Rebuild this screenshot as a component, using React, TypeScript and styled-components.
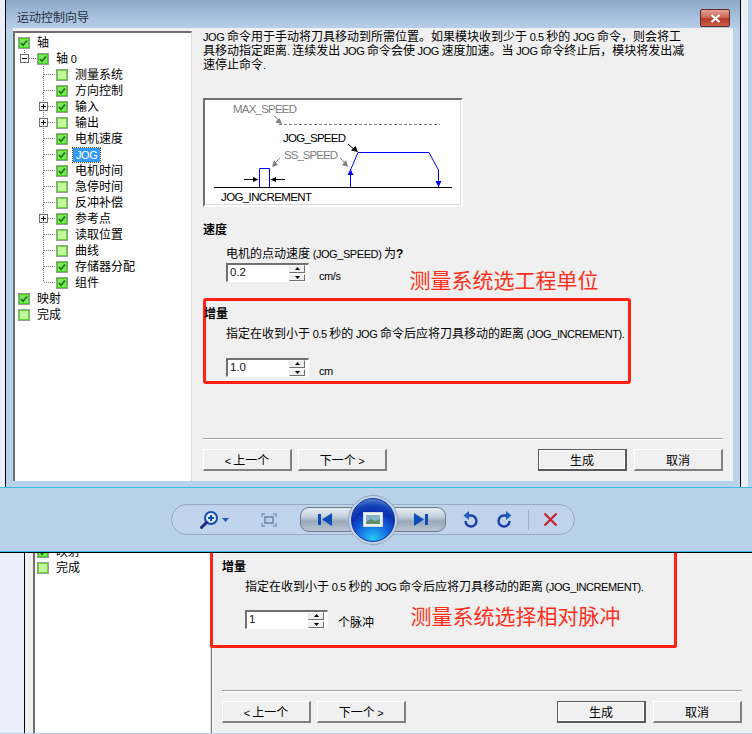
import React from "react";
import styled, { createGlobalStyle } from "styled-components";

const Global = createGlobalStyle`
  html, body { margin: 0; padding: 0; background: #b9d1ea; }
  body { width: 752px; height: 734px; overflow: hidden; font-family: "Liberation Sans", "Noto Sans CJK SC", sans-serif; font-size: 12px; color: #000; }
  * { box-sizing: border-box; }
`;

const Screen = styled.div`
  width: 752px; height: 734px; display: flex; flex-direction: column; overflow: hidden;
`;

const LatinRun = styled.span`
  font-size: 11px; letter-spacing: -0.42px;
`;
const Strong = styled.b`
  font-weight: 700;
`;

/* Latin runs are set narrower than the CJK runs, as the bitmap font of the dialog does. */
const T = ({ s }: { s: string }) => (
  <>
    {s.split(/([\x00-\x7f]+)/).map((part, i) =>
      /[\x00-\x7f]/.test(part) ? <LatinRun key={i}>{part}</LatinRun> : part
    )}
  </>
);

/* ---------- window frame ---------- */
const TopWindow = styled.div`
  height: 487px; flex: none; display: flex; background: #b9d1ea;
`;
const LightEdge = styled.div<{ $w: number }>`
  width: ${(p) => p.$w}px; flex: none; background: #e9f0f9;
`;
const FrameBody = styled.div`
  width: 736px; flex: none; border-left: 1px solid #000; border-right: 1px solid #000; display: flex; flex-direction: column; padding: 0 7px 6px 7px;
  background: linear-gradient(#8da8c8 0, #bad1ea 30px, #b9d1ea 100%);
`;
const TitleBar = styled.div`
  height: 28px; flex: none; display: flex; align-items: flex-start; justify-content: space-between; padding: 11px 3px 0 4px;
`;
const TitleText = styled.span`
  font-size: 12px; line-height: 14px; color: #1f2f42;
`;
const CloseBtn = styled.div`
  width: 30px; height: 18px; margin-top: -2px; border: 1px solid #5f2a24; border-radius: 2px; display: flex; align-items: center; justify-content: center;
  background: linear-gradient(#e3a295 0, #cf6a58 45%, #b53a28 55%, #c8604c 100%);
`;
const Client = styled.div`
  flex: 1; min-height: 0; display: flex; background: #f0f0f0;
`;

/* ---------- tree ---------- */
const TreePane = styled.div<{ $w: number; $bare?: boolean }>`
  width: ${(p) => p.$w}px; flex: none; position: relative; overflow: hidden; background: #fff;
  margin-top: ${(p) => (p.$bare ? 0 : 3)}px;
  border-left: 2px solid #6f6f6f;
  border-top: ${(p) => (p.$bare ? "none" : "2px solid #6f6f6f")};
  border-right: 1px solid #dcdcdc;
  padding-top: ${(p) => (p.$bare ? 0 : 1)}px;
`;
const TreeLines = styled.svg`
  position: absolute; left: 0; top: 0;
`;
const Row = styled.div<{ $indent: number; $first?: boolean }>`
  position: relative; height: 16px; display: flex; align-items: center; gap: 7px; padding-left: ${(p) => p.$indent}px;
  margin-top: ${(p) => (p.$first ? -9 : 0)}px; white-space: nowrap;
`;
const CheckBox = styled.span<{ $on: boolean }>`
  width: 12px; height: 12px; flex: none; border: 1px solid #9c9c9c; position: relative; display: block; top: 1px;
  background: ${(p) => (p.$on ? "#7fe85a" : "#c2f79b")};
  box-shadow: inset 0 0 0 1px ${(p) => (p.$on ? "#3ed015" : "#58dd2c")};
`;
const CheckMark = styled.svg`
  position: absolute; left: 1px; top: 1px;
`;
const Expander = styled.span<{ $left: number }>`
  position: absolute; left: ${(p) => p.$left}px; top: 4px; width: 9px; height: 9px; background: #fff; border: 1px solid #6c6c6c;
  display: flex; align-items: center; justify-content: center;
`;
const Label = styled.span<{ $selected?: boolean }>`
  line-height: 14px; position: relative; top: 1px;
  ${(p) => p.$selected ? "background:#3399ff;color:#fff;outline:1px dotted #7a4a00;padding:0 3px;margin-left:-2px;" : ""}
`;

/* ---------- right panel ---------- */
const Panel = styled.div<{ $left: number; $divider?: boolean }>`
  flex: 1; min-width: 0; position: relative; display: flex; flex-direction: column;
  padding: 0 10px 0 ${(p) => p.$left}px;
  border-left: ${(p) => (p.$divider ? "1px solid #808080" : "none")};
`;
const Intro = styled.p`
  margin: 2px 0 0; line-height: 14px; white-space: nowrap;
`;
const Frame = styled.div`
  margin-top: 26px; width: 260px; height: 109px; flex: none; border-top: 2px solid #6f6f6f; border-left: 2px solid #6f6f6f; border-right: 2px solid #fff; border-bottom: 2px solid #fff; background: #fff; box-shadow: inset -1px -1px 0 #dcdcdc;
`;
const Heading = styled.div<{ $mt: number; $ml: number }>`
  margin: ${(p) => p.$mt}px 0 0 ${(p) => p.$ml}px; line-height: 14px; font-weight: 700; white-space: nowrap;
`;
const Line = styled.div<{ $mt: number; $ml: number }>`
  margin: ${(p) => p.$mt}px 0 0 ${(p) => p.$ml}px; line-height: 14px; white-space: nowrap;
`;
const SpinRow = styled.div<{ $mt: number; $ml: number }>`
  margin: ${(p) => p.$mt}px 0 0 ${(p) => p.$ml}px; display: flex; align-items: flex-start; gap: 10px; height: 19px;
`;
const Spinner = styled.div`
  width: 83px; height: 19px; flex: none; display: flex; border-top: 2px solid #707070; border-left: 2px solid #707070; border-right: 1px solid #fff; border-bottom: 1px solid #fff; background: #fff; padding-right: 3px;
`;
const SpinValue = styled.span`
  flex: 1; padding-left: 2px; font-size: 11.5px; line-height: 15px; color: #111;
`;
const SpinBtns = styled.div`
  width: 16px; flex: none; display: flex; flex-direction: column; gap: 1px;
`;
const SpinBtn = styled.div`
  flex: 1; background: #f0f0f0; border-top: 1px solid #fff; border-bottom: 1px solid #6e6e6e; border-right: 1px solid #6e6e6e; border-left: 1px solid #e8e8e8; display: flex; align-items: center; justify-content: center;
`;
const Unit = styled.span`
  padding-top: 6px; line-height: 14px; white-space: nowrap; font-size: 12px;
`;
const RedBox = styled.div<{ $w: number; $noTop?: boolean; $ml: number; $mt: number; $pb: number; $pt: number }>`
  width: ${(p) => p.$w}px; flex: none; margin: ${(p) => p.$mt}px 0 0 ${(p) => p.$ml}px;
  padding: ${(p) => p.$pt}px 0 ${(p) => p.$pb}px;
  border: 3px solid #ff2214; border-radius: ${(p) => (p.$noTop ? "0 0 3px 3px" : "3px")};
  ${(p) => (p.$noTop ? "border-top: none;" : "")}
`;
const Note = styled.span<{ $left: number; $top: number }>`
  position: absolute; left: ${(p) => p.$left}px; top: ${(p) => p.$top}px; font-size: 21px; line-height: 26px; color: #ff3020; white-space: nowrap;
`;
const Divider = styled.div<{ $mt: number }>`
  margin-top: ${(p) => p.$mt}px; height: 2px; flex: none; border-top: 1px solid #a0a0a0; border-bottom: 1px solid #fff;
`;
const Buttons = styled.div`
  margin-top: 9px; display: flex; gap: 6px;
`;
const BtnText = styled.span`
  white-space: pre;
`;
const Btn = styled.div<{ $primary?: boolean; $push?: boolean; $gap?: number }>`
  width: 89px; height: 22px; flex: none; display: flex; align-items: center; justify-content: center; background: #f0f0f0; white-space: nowrap; line-height: 14px; padding-top: 2px;
  border-top: 1px solid ${(p) => (p.$primary ? "#5a5a5a" : "#fff")};
  border-left: 1px solid ${(p) => (p.$primary ? "#5a5a5a" : "#fff")};
  border-right: 2px solid ${(p) => (p.$primary ? "#5a5a5a" : "#808080")};
  border-bottom: 2px solid ${(p) => (p.$primary ? "#5a5a5a" : "#808080")};
  margin-left: ${(p) => (p.$push ? "auto" : "0")};
  ${(p) => (p.$gap ? `margin-left:${p.$gap}px;` : "")}
  ${(p) => (p.$primary ? "box-shadow: inset 0 0 0 1px #fff;" : "")}
`;

/* ---------- viewer toolbar ---------- */
const Viewer = styled.div`
  height: 65px; flex: none; background: #b9d1ea; border-top: 1px solid #3fbde0; border-bottom: 1px solid #3fbde0; display: flex; align-items: center; padding: 0 0 0 171px;
  box-shadow: 0 1px 0 #000;
  position: relative; z-index: 1;
`;
const Pill = styled.div`
  width: 404px; height: 31px; border: 1px solid #98a9c2; border-radius: 16px; background: #bfd4ec; display: flex; align-items: center;
`;
const ToolItem = styled.div<{ $ml: number; $w: number }>`
  margin-left: ${(p) => p.$ml}px; width: ${(p) => p.$w}px; flex: none; display: flex; align-items: center; justify-content: center;
`;
const ToolSep = styled.div`
  margin-left: 16px; width: 1px; height: 20px; background: #9fb0c6; flex: none;
`;
const NavCluster = styled.div`
  margin-left: 23px; width: 146px; height: 25px; flex: none; display: flex; justify-content: space-between; position: relative;
`;
const NavBtn = styled.div<{ $side: "l" | "r" }>`
  width: 54px; height: 25px; display: flex; align-items: center;
  justify-content: ${(p) => (p.$side === "l" ? "flex-start" : "flex-end")};
  padding: 0 ${(p) => (p.$side === "r" ? 17 : 0)}px 0 ${(p) => (p.$side === "l" ? 17 : 0)}px;
  border: 1px solid #6d7786;
  border-radius: ${(p) => (p.$side === "l" ? "9px 0 0 9px" : "0 9px 9px 0")};
  background: linear-gradient(#e3eaf2 0, #c9d4e0 35%, #99a8ba 58%, #b7c4d3 100%);
`;
const NavOrb = styled.div`
  position: absolute; left: 50%; top: 50%; width: 50px; height: 50px; margin: -25px 0 0 -25px; border-radius: 50%;
  background: #c3d5ea; border: 1px solid #93a3b8; display: flex; align-items: center; justify-content: center;
`;
const OrbCore = styled.div`
  width: 44px; height: 44px; border-radius: 50%; display: flex; align-items: center; justify-content: center; border: 1px solid #0b2f9c;
  background: radial-gradient(circle at 50% 95%, #28c8f5 0, #0f62dd 38%, #0a2fb0 62%, #1545b8 75%, #8db0e6 100%);
`;

/* ---------- bottom ---------- */
const BottomWindow = styled.div`
  flex: 1; min-height: 0; display: flex; background: #f0f0f0; border-bottom: 1px solid #b9d1ea; overflow: hidden;
`;
const BottomClient = styled.div`
  flex: 1; min-width: 0; display: flex; border-left: 1px solid #000; padding-left: 8px;
`;

/* ---------- data ---------- */
type Item = { t: string; on: boolean; level: number; exp?: "+" | "-"; sel?: boolean };
const items: Item[] = [
  { t: "轴", on: true, level: 0 },
  { t: "轴 0", on: true, level: 1, exp: "-" },
  { t: "测量系统", on: false, level: 2 },
  { t: "方向控制", on: true, level: 2 },
  { t: "输入", on: true, level: 2, exp: "+" },
  { t: "输出", on: false, level: 2, exp: "+" },
  { t: "电机速度", on: true, level: 2 },
  { t: "JOG", on: true, level: 2, sel: true },
  { t: "电机时间", on: true, level: 2 },
  { t: "急停时间", on: false, level: 2 },
  { t: "反冲补偿", on: false, level: 2 },
  { t: "参考点", on: true, level: 2, exp: "+" },
  { t: "读取位置", on: false, level: 2 },
  { t: "曲线", on: false, level: 2 },
  { t: "存储器分配", on: true, level: 2 },
  { t: "组件", on: true, level: 2 },
  { t: "映射", on: true, level: 0 },
  { t: "完成", on: false, level: 0 },
];

const Check = ({ on }: { on: boolean }) => (
  <CheckBox $on={on}>
    {on && (
      <CheckMark width="8" height="8" viewBox="0 0 8 8">
        <path d="M1 4 L3 6.2 L7 1.5" fill="none" stroke="#17701a" strokeWidth="1.7" />
      </CheckMark>
    )}
  </CheckBox>
);

const ExpIcon = ({ open }: { open: boolean }) => (
  <svg width="7" height="7" viewBox="0 0 7 7">
    <path d={open ? "M1 3.5H6" : "M1 3.5H6M3.5 1V6"} stroke="#000" strokeWidth="1" />
  </svg>
);

const Tree = () => {
  const rowsY = [74, 90, 106, 122, 138, 154, 170, 186, 202, 218, 234, 250, 266, 282];
  return (
    <TreePane $w={179}>
      <TreeLines width="176" height="448" viewBox="15 33 176 448">
        <g stroke="#7a7a7a" strokeDasharray="1 1" fill="none">
          <path d="M24.5 48V54M29 58.5H37M43.5 64V282" />
          {rowsY.map((y) => (
            <path key={y} d={`M44 ${y + 0.5}H56`} />
          ))}
        </g>
      </TreeLines>
      {items.map((it) => (
        <Row key={it.t} $indent={3 + 19 * it.level}>
          {it.exp && (
            <Expander $left={it.level === 1 ? 5 : 24}>
              <ExpIcon open={it.exp === "-"} />
            </Expander>
          )}
          <Check on={it.on} />
          <Label $selected={it.sel}><T s={it.t} /></Label>
        </Row>
      ))}
    </TreePane>
  );
};

const Spin = ({ v }: { v: string }) => (
  <Spinner>
    <SpinValue>{v}</SpinValue>
    <SpinBtns>
      <SpinBtn>
        <svg width="5" height="3" viewBox="0 0 5 3"><path d="M2.5 0L5 3H0Z" fill="#000" /></svg>
      </SpinBtn>
      <SpinBtn>
        <svg width="5" height="3" viewBox="0 0 5 3"><path d="M0 0H5L2.5 3Z" fill="#000" /></svg>
      </SpinBtn>
    </SpinBtns>
  </Spinner>
);

const DiagramText = styled.text<{ $c: string }>`
  font-family: "Liberation Sans", sans-serif; font-size: 11.5px; fill: ${(p) => p.$c};
`;

const Diagram = () => (
  <Frame>
    <svg width="256" height="105" viewBox="205 100 256 105">
      <DiagramText x="233" y="113" $c="#808080" textLength="64">MAX_SPEED</DiagramText>
      <path d="M279 124.5H440" stroke="#808080" strokeDasharray="3 2" />
      <path d="M274 116L281 122" stroke="#808080" />
      <path d="M282 124L275 122.5L279.5 118Z" fill="#808080" />
      <DiagramText x="283" y="142" $c="#000" textLength="63">JOG_SPEED</DiagramText>
      <path d="M348 144L355 150" stroke="#000" />
      <path d="M358 152L351 150.5L355.5 146Z" fill="#000" />
      <DiagramText x="284" y="159" $c="#808080" textLength="54">SS_SPEED</DiagramText>
      <path d="M280 158L274 164" stroke="#808080" />
      <path d="M272 167L274 160L278 165Z" fill="#808080" />
      <path d="M340 158L346 164" stroke="#808080" />
      <path d="M348 167L342 165L346 160Z" fill="#808080" />
      <path d="M214 187.5H452" stroke="#000" />
      <path d="M259.5 187V168.5H269.5V187" fill="none" stroke="#0000ff" />
      <path d="M350.5 187V170L358 152.5H429L438.5 170V187" fill="none" stroke="#0000ff" />
      <path d="M350.5 169L347.5 175H353.5Z" fill="#0000ff" />
      <path d="M438.5 187L435.5 181H441.5Z" fill="#0000ff" />
      <path d="M244 179.5H257" stroke="#000" />
      <path d="M258.5 179.5L253 177V182Z" fill="#000" />
      <path d="M285 179.5H272" stroke="#000" />
      <path d="M270.5 179.5L276 177V182Z" fill="#000" />
      <DiagramText x="221" y="201" $c="#000" textLength="91">JOG_INCREMENT</DiagramText>
    </svg>
  </Frame>
);

const ToolBar = () => (
  <Viewer>
    <Pill>
      <ToolItem $ml={28} $w={32}>
        <svg width="32" height="18" viewBox="0 0 32 18">
          <circle cx="11" cy="7" r="6" fill="#dfeaf8" stroke="#174bb4" strokeWidth="2" />
          <path d="M8 7H14M11 4V10" stroke="#174bb4" strokeWidth="2" />
          <path d="M6.5 11.5L1.5 16.5" stroke="#1a2f80" strokeWidth="3" strokeLinecap="round" />
          <path d="M22 7H29L25.5 11Z" fill="#2458b8" />
        </svg>
      </ToolItem>
      <ToolItem $ml={29} $w={16}>
        <svg width="16" height="14" viewBox="0 0 16 14" fill="none" stroke="#7f97bd" strokeWidth="1.5">
          <path d="M1 4V1H4M12 1H15V4M15 10V13H12M4 13H1V10" />
          <rect x="4" y="4" width="8" height="6" strokeWidth="2" />
        </svg>
      </ToolItem>
      <NavCluster>
        <NavBtn $side="l">
          <svg width="15" height="13" viewBox="0 0 15 13"><path d="M0 1H3V12H0ZM14 0V13L4 6.5Z" fill="#0d4db5" /></svg>
        </NavBtn>
        <NavBtn $side="r">
          <svg width="15" height="13" viewBox="0 0 15 13"><path d="M15 1H12V12H15ZM1 0V13L11 6.5Z" fill="#0d4db5" /></svg>
        </NavBtn>
        <NavOrb>
          <OrbCore>
            <svg width="20" height="15" viewBox="0 0 20 15">
              <rect x="0.5" y="0.5" width="19" height="14" fill="#eef3f8" stroke="#cfd9e4" />
              <rect x="3" y="3" width="14" height="9" fill="#7fb4c9" />
              <path d="M3 10L8 7L12 9L17 7V12H3Z" fill="#5f8f6a" />
            </svg>
          </OrbCore>
        </NavOrb>
      </NavCluster>
      <ToolItem $ml={17} $w={16}>
        <svg width="16" height="17" viewBox="0 0 16 17" fill="none">
          <path d="M5 4.5H8A5.5 5.5 0 1 1 2.5 10" stroke="#1f3fa8" strokeWidth="2.4" />
          <path d="M6 0L0.5 4.5L6 9Z" fill="#1f5fc0" />
        </svg>
      </ToolItem>
      <ToolItem $ml={17} $w={16}>
        <svg width="16" height="17" viewBox="0 0 16 17" fill="none">
          <path d="M11 4.5H8A5.5 5.5 0 1 0 13.5 10" stroke="#1f3fa8" strokeWidth="2.4" />
          <path d="M10 0L15.5 4.5L10 9Z" fill="#1f5fc0" />
        </svg>
      </ToolItem>
      <ToolSep />
      <ToolItem $ml={14} $w={15}>
        <svg width="15" height="15" viewBox="0 0 15 15">
          <path d="M1.5 1.5L13.5 13.5M13.5 1.5L1.5 13.5" stroke="#c8202a" strokeWidth="2.2" />
        </svg>
      </ToolItem>
    </Pill>
  </Viewer>
);

const INCR = "指定在收到小于 0.5 秒的 JOG 命令后应将刀具移动的距离 (JOG_INCREMENT).";

const NavButtons = () => (
  <Buttons>
    <Btn><BtnText><T s="< " />上一个</BtnText></Btn>
    <Btn><BtnText>下一个<T s=" >" /></BtnText></Btn>
    <Btn $primary $push>生成</Btn>
    <Btn $gap={1}>取消</Btn>
  </Buttons>
);

export default function App() {
  return (
    <Screen>
      <Global />
      <TopWindow>
        <LightEdge $w={5} />
        <FrameBody>
          <TitleBar>
            <TitleText>运动控制向导</TitleText>
            <CloseBtn>
              <svg width="11" height="9" viewBox="0 0 11 9">
                <path d="M1.5 1L9.5 8M9.5 1L1.5 8" stroke="#fff" strokeWidth="2.2" />
              </svg>
            </CloseBtn>
          </TitleBar>
          <Client>
            <Tree />
            <Panel $left={11}>
              <Intro>
                <T s="JOG 命令用于手动将刀具移动到所需位置。如果模块收到少于 0.5 秒的 JOG 命令，则会将工" />
                <br />
                <T s="具移动指定距离. 连续发出 JOG 命令会使 JOG 速度加速。当 JOG 命令终止后，模块将发出减" />
                <br />
                <T s="速停止命令." />
              </Intro>
              <Diagram />
              <Heading $mt={16} $ml={0}>速度</Heading>
              <Line $mt={10} $ml={23}><T s="电机的点动速度 (JOG_SPEED) 为" /><Strong>?</Strong></Line>
              <SpinRow $mt={2} $ml={23}>
                <Spin v="0.2" />
                <Unit><T s="cm/s" /></Unit>
              </SpinRow>
              <Note $left={217.5} $top={240}>测量系统选工程单位</Note>
              <RedBox $w={428} $ml={0} $mt={16} $pt={6} $pb={4}>
                <Heading $mt={0} $ml={-2}>增量</Heading>
                <Line $mt={6} $ml={20}><T s={INCR} /></Line>
                <SpinRow $mt={17} $ml={20}>
                  <Spin v="1.0" />
                  <Unit><T s="cm" /></Unit>
                </SpinRow>
              </RedBox>
              <Divider $mt={54} />
              <NavButtons />
            </Panel>
          </Client>
        </FrameBody>
        <LightEdge $w={7} />
      </TopWindow>
      <ToolBar />
      <BottomWindow>
        <LightEdge $w={24} />
        <BottomClient>
          <TreePane $w={178} $bare>
            <Row $indent={2} $first>
              <Check on />
              <Label>映射</Label>
            </Row>
            <Row $indent={2}>
              <Check on={false} />
              <Label>完成</Label>
            </Row>
          </TreePane>
          <Panel $left={10} $divider>
            <RedBox $w={467} $ml={-12} $mt={0} $pt={8} $pb={16} $noTop>
              <Heading $mt={0} $ml={9}>增量</Heading>
              <Line $mt={6} $ml={32}><T s={INCR} /></Line>
              <SpinRow $mt={16} $ml={32}>
                <Spin v="1" />
                <Unit>个脉冲</Unit>
              </SpinRow>
            </RedBox>
            <Note $left={198.5} $top={52}>测量系统选择相对脉冲</Note>
            <Divider $mt={42} />
            <NavButtons />
          </Panel>
        </BottomClient>
      </BottomWindow>
    </Screen>
  );
}
